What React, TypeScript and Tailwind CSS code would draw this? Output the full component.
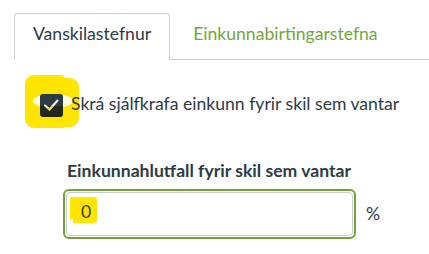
import React from "react";

export default function App() {
  return (
    <div
      className="relative w-[429px] h-[254px] bg-white overflow-hidden text-[#2d3b45]"
      style={{ fontFamily: "Lato, 'Noto Sans', sans-serif" }}
    >
      {/* Tabs */}
      <div className="ml-[14px] mt-[13px] flex border-b border-[#c7cdd1]">
        <div className="-mb-px rounded-t-[4px] border border-[#c7cdd1] border-b-white bg-white px-[18px] pt-[9px] pb-[14px] text-[17.6px] leading-[22px]">
          Vanskilastefnur
        </div>
        <div className="-mb-px ml-[4px] border border-transparent px-[18px] pt-[9px] pb-[14px] text-[17.6px] leading-[22px] text-[#74a63a]">
          Einkunnabirtingarstefna
        </div>
      </div>

      {/* Checkbox row */}
      <div className="relative mt-[33px] flex items-start pl-[40px]">
        {/* yellow annotation highlight */}
        <div className="absolute left-[25px] top-[-18px] h-[53px] w-[39px] rounded-l-[9px] rounded-tr-[2px] bg-[#ffe500]" />
        <div className="absolute left-[64px] top-[-15px] h-[49px] w-[15px] rounded-r-[9px] bg-[#ffe500]" />
        <div className="absolute left-[33px] top-[1px] h-[14px] w-[40px] rounded-[50%] bg-[#fffbe0]" />
        <svg
          width="23"
          height="23"
          viewBox="0 0 23 23"
          className="relative mt-[1px] shrink-0"
        >
          <defs>
            <clipPath id="cb">
              <rect x="0" y="0" width="23" height="23" rx="3" />
            </clipPath>
          </defs>
          <g clipPath="url(#cb)">
            <rect x="0" y="0" width="23" height="12" fill="#2d3b45" />
            <rect x="0" y="12" width="23" height="11" fill="#23281c" />
          </g>
          <path
            d="M5 11.5 L9.5 15.5 L17.5 6.5"
            fill="none"
            stroke="#ffffff"
            strokeWidth="2"
            strokeLinecap="round"
            strokeLinejoin="round"
          />
          <path
            d="M7.5 13.7 L9.5 15.5 L12.3 12.3"
            fill="none"
            stroke="#e8d640"
            strokeWidth="2"
            strokeLinecap="round"
            strokeLinejoin="round"
          />
        </svg>
        <span className="relative ml-[8px] text-[17.6px] leading-[22px]">
          Skrá sjálfkrafa einkunn fyrir skil sem vantar
        </span>
      </div>

      {/* Percentage field */}
      <div className="ml-[63px] mt-[43px]">
        <div className="pl-[4px] text-[17.6px] font-bold leading-[22px]">
          Einkunnahlutfall fyrir skil sem vantar
        </div>
        <div className="mt-[7px] flex items-center">
          <div className="h-[50px] w-[293px] rounded-[6px] border-2 border-[#74a03a] p-[1px]">
            <div className="relative h-full w-full rounded-[4px] border border-[#c7cdd1] pl-[14px] pt-[7px]">
              <div className="absolute left-[3px] top-[4px] h-[26px] w-[27px] rounded-[3px] bg-[#ffe500]" />
              <div className="absolute left-[3px] top-[26px] h-[4px] w-[3px] bg-white" />
              <span className="relative text-[17.6px] leading-[22px] text-[#3d3f1a]">0</span>
            </div>
          </div>
          <span className="ml-[10px] text-[17.6px] leading-[22px]">%</span>
        </div>
      </div>
    </div>
  );
}
